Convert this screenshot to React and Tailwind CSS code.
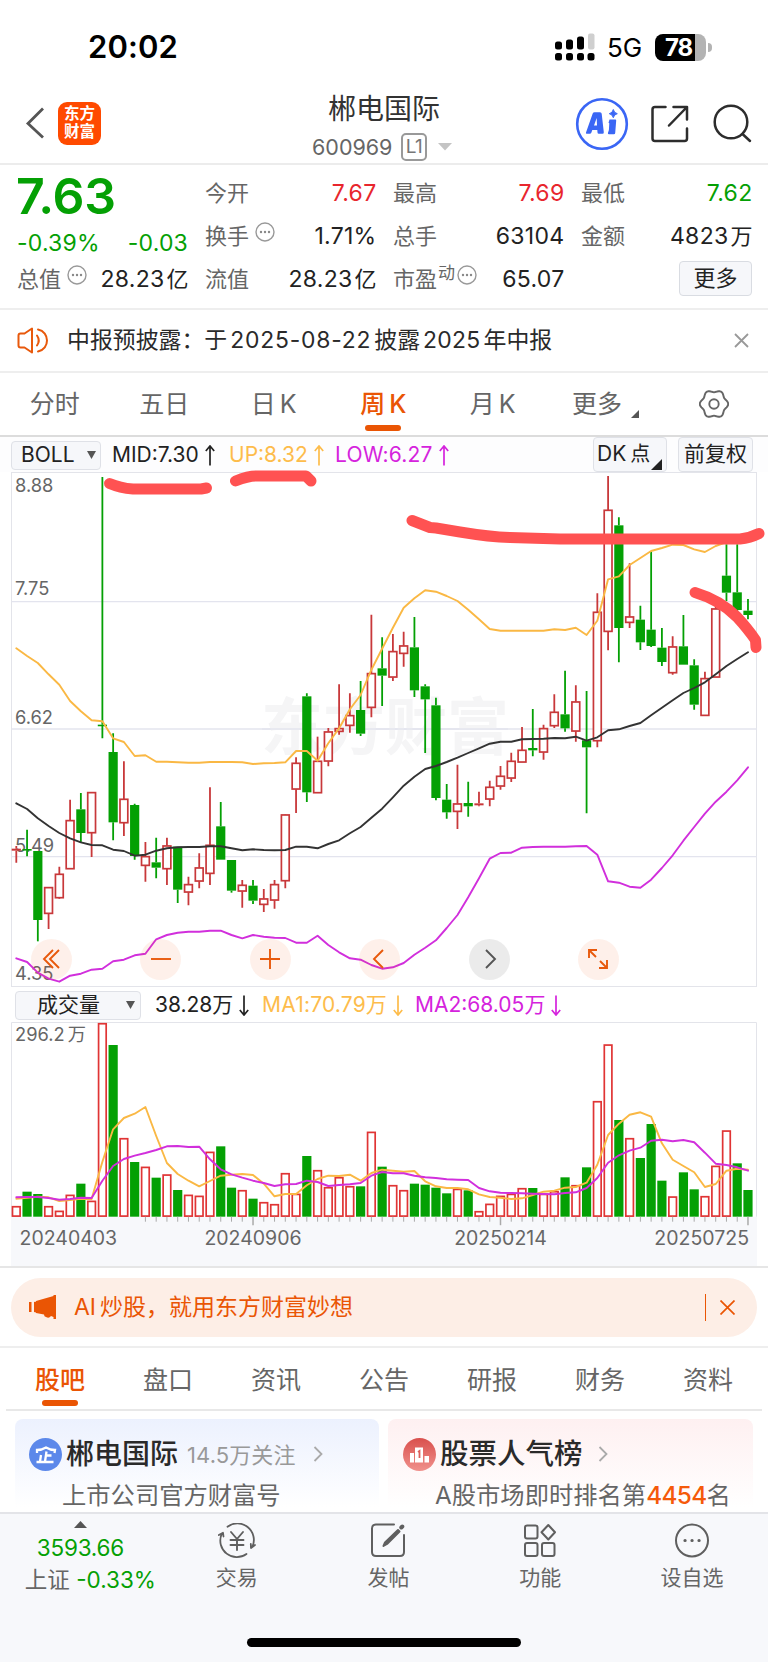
import React from "react";

const FONT = "font-['Inter','Noto_Sans_CJK_SC',sans-serif]";
const GREEN = "#04a004";
const RED = "#c8383a";
const VOL_RED = "#e03434";

const STEP = 10.76;
const cx = (i) => 16.3 + i * STEP;

// [high, bodyTop, bodyBottom, low, up] in thirds of a pixel from the price panel origin
const CANDLES = [
  [1140, 1148, 1154, 1190, 1], [1091, 1149, 1153, 1171, 0], [1155, 1155, 1362, 1426, 0], [1264, 1264, 1343, 1389, 1],
  [1202, 1224, 1296, 1298, 1], [1001, 1063, 1209, 1209, 1], [981, 1030, 1101, 1130, 0], [978, 979, 1101, 1173, 1],
  [33, 776, 780, 817, 0], [802, 858, 1069, 1123, 0], [886, 999, 1071, 1110, 1], [1013, 1017, 1170, 1181, 0],
  [1128, 1171, 1199, 1247, 1], [1115, 1189, 1205, 1237, 0], [1115, 1139, 1209, 1257, 1], [1142, 1142, 1271, 1311, 0],
  [1232, 1255, 1279, 1318, 1], [1162, 1205, 1246, 1267, 1], [964, 1137, 1223, 1257, 1], [1008, 1081, 1181, 1181, 0],
  [1182, 1182, 1274, 1280, 0], [1242, 1257, 1276, 1325, 1], [1242, 1259, 1304, 1314, 0], [1269, 1298, 1316, 1338, 1],
  [1242, 1255, 1303, 1328, 1], [1045, 1046, 1245, 1267, 1], [874, 891, 970, 1041, 1], [682, 691, 979, 1008, 0],
  [812, 885, 981, 981, 1], [786, 797, 886, 901, 1], [655, 787, 797, 806, 1], [682, 748, 779, 800, 1],
  [645, 732, 803, 810, 0], [446, 622, 725, 754, 1], [514, 607, 629, 720, 0], [504, 556, 634, 645, 1],
  [497, 539, 563, 602, 1], [453, 544, 673, 693, 0], [655, 661, 700, 861, 0], [695, 718, 996, 1003, 0],
  [954, 1001, 1039, 1058, 0], [896, 1013, 1037, 1089, 1], [947, 1011, 1021, 1052, 0], [977, 1012, 1018, 1021, 1],
  [944, 963, 1000, 1021, 1], [900, 930, 961, 971, 1], [860, 885, 937, 948, 1], [783, 852, 889, 889, 1],
  [729, 846, 853, 871, 0], [776, 787, 859, 881, 1], [685, 738, 780, 786, 1], [614, 745, 787, 797, 0],
  [658, 707, 796, 827, 1], [675, 823, 844, 1042, 0], [382, 438, 825, 844, 1], [30, 132, 497, 553, 1],
  [154, 178, 486, 589, 0], [292, 452, 470, 486, 1], [419, 461, 529, 552, 0], [257, 491, 540, 543, 0],
  [486, 545, 588, 600, 0], [511, 542, 621, 626, 1], [447, 541, 596, 596, 0], [580, 598, 716, 731, 0],
  [617, 637, 749, 749, 1], [400, 428, 634, 634, 1], [235, 329, 380, 405, 0], [235, 379, 432, 472, 0],
  [399, 434, 447, 460, 0],
];

const UP = [547, 570, 591, 625, 656, 705, 736, 763, 766, 817, 828, 870, 868, 887, 887, 889, 890, 890, 888, 888, 888, 889, 894, 892, 891, 889, 855, 855, 884, 832, 787, 730, 687, 611, 548, 485, 425, 397, 373, 377, 390, 405, 431, 460, 489, 494, 494, 494, 494, 494, 490, 492, 485, 507, 464, 340, 331, 297, 276, 255, 246, 236, 237, 250, 258, 240, 228, 226, 226];
const MID = [1012, 1029, 1057, 1080, 1101, 1117, 1129, 1137, 1138, 1151, 1155, 1169, 1166, 1154, 1147, 1144, 1143, 1143, 1141, 1141, 1147, 1153, 1150, 1152, 1153, 1152, 1142, 1142, 1147, 1134, 1123, 1102, 1083, 1055, 1028, 994, 959, 932, 909, 900, 888, 875, 861, 847, 833, 827, 827, 820, 819, 818, 816, 817, 812, 824, 814, 793, 790, 780, 771, 748, 725, 703, 681, 666, 649, 625, 600, 579, 559];
const LOW = [1477, 1488, 1520, 1538, 1547, 1529, 1523, 1511, 1508, 1486, 1481, 1468, 1463, 1420, 1407, 1400, 1397, 1397, 1394, 1394, 1407, 1417, 1407, 1412, 1415, 1416, 1430, 1430, 1409, 1437, 1459, 1477, 1481, 1497, 1508, 1504, 1491, 1466, 1445, 1423, 1386, 1347, 1294, 1237, 1178, 1161, 1160, 1145, 1143, 1142, 1142, 1142, 1141, 1140, 1166, 1246, 1250, 1262, 1265, 1241, 1206, 1168, 1124, 1083, 1043, 1007, 977, 943, 904];

// bar tops in thirds of a pixel; a negative value is a falling week
const VOLUME = [679, -635, -642, 679, 693, 645, -611, 663, 130, -195, 475, -546, 561, -593, 584, -630, 645, 648, 516, -499, -623, 631, -656, 667, 673, 580, 642, -528, 571, 622, 592, 619, -619, 456, -560, 616, 631, -611, -614, -623, -640, 627, -631, 694, 672, 648, 642, 625, -624, 642, 634, -592, 616, -562, 364, 194, -420, 475, -534, -432, -602, 650, -577, -628, 649, 558, 452, -550, -630];
const MA1 = [656, 653, 650, 652, 663, 660, 656, 657, 545, 448, 414, 401, 381, 468, 549, 582, 602, 619, 603, 587, 584, 582, 585, 611, 649, 642, 642, 616, 597, 587, 588, 584, 602, 579, 569, 572, 575, 573, 604, 619, 624, 624, 628, 643, 651, 653, 657, 655, 645, 635, 632, 623, 621, 608, 554, 465, 431, 404, 397, 410, 490, 539, 558, 577, 621, 612, 572, 566, 569];
const MA2 = [652, 651, 651, 654, 659, 657, 653, 654, 602, 558, 537, 527, 519, 510, 499, 498, 501, 500, 538, 568, 583, 593, 602, 609, 618, 613, 612, 602, 606, 618, 615, 613, 609, 587, 576, 580, 580, 587, 592, 594, 598, 599, 600, 624, 634, 638, 639, 640, 641, 642, 643, 639, 637, 624, 594, 548, 526, 512, 503, 482, 479, 484, 480, 487, 518, 551, 555, 562, 572];

const line = (vals, off) => vals.map((v, i) => `${cx(i).toFixed(1)},${(v / 3 - off).toFixed(1)}`).join(" ");

const GEAR = Array.from({ length: 72 }, (_, i) => {
  const a = (i * Math.PI) / 36;
  const r = 13 + 1.2 * Math.cos(6 * a);
  return `${(15 + r * Math.cos(a)).toFixed(2)},${(15 + r * Math.sin(a)).toFixed(2)}`;
}).join(" ");

function Line({ data, off, color }) {
  return <polyline points={line(data, off)} fill="none" stroke={color} strokeWidth="1.9" strokeLinejoin="round" strokeLinecap="round" />;
}

function Dots() {
  return (
    <svg width="20" height="20" viewBox="0 0 20 20" fill="none" className="shrink-0">
      <circle cx="10" cy="10" r="9" stroke="#999" strokeWidth="1.4" />
      <circle cx="6" cy="10" r="1.2" fill="#888" />
      <circle cx="10" cy="10" r="1.2" fill="#888" />
      <circle cx="14" cy="10" r="1.2" fill="#888" />
    </svg>
  );
}

function StatusBar() {
  return (
    <div className="flex h-[82px] items-start justify-between pl-[88px] pr-[56px] pt-[27px]">
      <div className="text-[31px] font-semibold leading-[40px] tracking-[0.1px] text-black">20:02</div>
      <div className="flex items-center pt-[5px]">
        <svg width="40" height="28" viewBox="0 0 40 28" fill="#000">
          <rect x="0" y="8.5" width="7" height="8" rx="2.5" />
          <rect x="11" y="6.5" width="7" height="10" rx="2.5" />
          <rect x="22" y="3.5" width="7" height="13" rx="2.5" />
          <rect x="33" y="0.5" width="6.5" height="16" rx="2" fill="#cfcfcf" />
          <rect x="0" y="20" width="7" height="7.5" rx="2.5" />
          <rect x="11" y="20" width="7" height="7.5" rx="2.5" />
          <rect x="22" y="20" width="7" height="7.5" rx="2.5" />
          <rect x="32.5" y="20" width="7" height="7.5" rx="2.5" />
        </svg>
        <div className="ml-[12px] w-[38px] whitespace-nowrap pt-[2px] text-[26px] leading-[28px] tracking-[0px] text-black">5G</div>
        <div className="ml-[10px] flex items-center gap-[2px]">
          <div className="h-[27px] w-[51px] rounded-[8px] bg-[linear-gradient(90deg,#000_40px,#b3b3b3_40px)] pl-[10px] text-[24px] font-bold leading-[27px] tracking-[-1.2px] text-white">
            78
          </div>
          <div className="h-[9px] w-[4px] rounded-r-full bg-[#b3b3b3]" />
        </div>
      </div>
    </div>
  );
}

function Header() {
  return (
    <div className="flex h-[83px] items-start border-b-2 border-[#ececec]">
      <div className="flex w-[300px] items-center pl-[25px] pt-[20px]">
        <svg width="20" height="32" viewBox="0 0 20 32" fill="none" stroke="#555" strokeWidth="2.8">
          <path d="M18 1.5 3 16.5 18 30.500" />
        </svg>
        <div className="ml-[13px] flex h-[43px] w-[43px] flex-col items-center justify-center rounded-[9px] bg-[#ff4a00] text-[15.500px] font-bold leading-[18px] text-white">
          <span>东方</span>
          <span>财富</span>
        </div>
      </div>
      <div className="flex w-[168px] flex-col items-center">
        <div className="pt-[9px] text-[28px] leading-[36px] text-[#333]">郴电国际</div>
        <div className="flex items-center self-start pl-[12px] pt-[6px]">
          <span className="w-[82px] text-[21.500px] leading-[28px] tracking-[0px] text-[#666]">600969</span>
          <span className="ml-[7px] flex h-[28px] w-[26px] items-center justify-center rounded-[5px] border-2 border-[#999] text-[19px] leading-[24px] tracking-[-0.5px] text-[#777]">L1</span>
          <svg className="ml-[11px]" width="14" height="8" viewBox="0 0 14 8" fill="#c4c4c4"><path d="M0 0H14L7 7.5Z" /></svg>
        </div>
      </div>
      <div className="flex grow items-center justify-end pr-[16px] pt-[15px]">
        <svg width="54" height="54" viewBox="0 0 54 54" fill="none">
          <circle cx="27" cy="27" r="24.8" stroke="#3a66f5" strokeWidth="2.6" />
          <path
            d="M11 35.500 17.700 16.500Q18.200 15.300 19.500 15.300H25Q26.500 15.300 26.700 16.800L28.800 35.200Q28.900 36.700 27.500 36.700H23.800Q22.600 36.700 22.500 35.500L22.300 33H17.300L16.300 35.700Q15.900 36.700 14.800 36.700H11.800Q10.600 36.700 11 35.500ZM19 28.500 21.700 21 22 28.500Z"
            fill="#3a66f5"
            fillRule="evenodd"
          />
          <path d="M34.500 22.500H40.300Q41.300 22.500 41.200 23.500L40.200 36Q40.100 37.300 38.800 37.300H34Q32.800 37.300 32.900 36L33.900 33 34.300 26.200 33.500 25.800Z" fill="#3a66f5" />
          <path d="M38.300 12.500Q39 16 42.300 16.700Q39 17.400 38.300 20.700Q37.600 17.400 34.300 16.700Q37.600 16 38.300 12.500Z" fill="#3a66f5" stroke="#3a66f5" />
        </svg>
        <svg className="ml-[22px]" width="38" height="38" viewBox="0 0 38 38" fill="none" stroke="#2d2d2d" strokeWidth="2.5" strokeLinecap="round" strokeLinejoin="round">
          <path d="M14.5 2H4Q1.500 2 1.500 4.500V33.500Q1.500 36 4 36H33.500Q36 36 36 33.500V23.500" />
          <path d="M22.500 2H36V14.500M36 2 18 20.500" />
        </svg>
        <svg className="ml-[24px]" width="39" height="39" viewBox="0 0 39 39" fill="none" stroke="#2d2d2d" strokeWidth="2.5" strokeLinecap="round">
          <circle cx="18" cy="18" r="16.3" />
          <path d="M29.5 30 37 37" />
        </svg>
      </div>
    </div>
  );
}

function Stat({ label, extra, value, unit, className }) {
  return (
    <div className="flex h-[43px] items-center justify-between">
      <div className="flex items-center text-[22px] text-[#666]">
        {label}
        {extra}
      </div>
      <div className={className + " -mr-[0.5px] whitespace-nowrap text-[23px] tracking-[0.3px]"}>
        {value}
        {unit && <span className="pl-[2px] text-[22px] tracking-normal">{unit}</span>}
      </div>
    </div>
  );
}

function Quote() {
  return (
    <div className="flex h-[145px] justify-between border-b-2 border-[#eee] pl-[17px] pr-[16px] pt-[7px]">
      <div className="flex w-[171px] flex-col">
        <div className="-ml-[1px] h-[48px] text-[50px] font-semibold leading-[48px] tracking-[-0.3px] text-[#04a004]">7.63</div>
        <div className="mt-[5px] flex h-[36px] items-center justify-between text-[23px] tracking-[0.2px] text-[#04a004]">
          <span>-0.39%</span>
          <span>-0.03</span>
        </div>
        <div className="-mt-[3px]">
          <Stat label="总值" extra={<span className="-mt-[9px] ml-[6px]"><Dots /></span>} value="28.23" unit="亿" className="text-[#222]" />
        </div>
      </div>
      <div className="w-[171px]">
        <Stat label="今开" value="7.67" className="text-[#e8262d]" />
        <Stat label="换手" extra={<span className="-mt-[9px] ml-[6px]"><Dots /></span>} value="1.71%" className="text-[#222]" />
        <Stat label="流值" value="28.23" unit="亿" className="text-[#222]" />
      </div>
      <div className="w-[171px]">
        <Stat label="最高" value="7.69" className="text-[#e8262d]" />
        <Stat label="总手" value="63104" className="text-[#222]" />
        <Stat
          label="市盈"
          extra={<span className="-mt-[12px] ml-[1px] flex items-center gap-[2px] text-[17px]">动<span className="pt-[3px]"><Dots /></span></span>}
          value="65.07"
          className="text-[#222]"
        />
      </div>
      <div className="w-[171px]">
        <Stat label="最低" value="7.62" className="text-[#04a004]" />
        <Stat label="金额" value="4823" unit="万" className="text-[#222]" />
        <div className="flex justify-end pt-[3px]">
          <div className="flex h-[35px] w-[73px] items-center justify-center rounded-[4px] border border-[#d9dce2] bg-[#f6f7fa] text-[22px] text-[#222]">更多</div>
        </div>
      </div>
    </div>
  );
}

function Notice() {
  return (
    <div className="flex h-[63px] items-center border-b-2 border-[#eee] pl-[17px] pr-[19px]">
      <svg width="32" height="27" viewBox="0 0 32 27" fill="none" stroke="#e8590c" strokeWidth="2" strokeLinecap="round" strokeLinejoin="round">
        <path d="M15 1.5V25.5L7.500 20.500H3.500Q1.500 20.500 1.500 18.500V8.500Q1.500 6.500 3.500 6.500H7.500Z" />
        <path d="M20 8.5Q23.500 13.500 20 18.500M21 2.500C33 5 33 22 21 24.500" />
      </svg>
      <div className="ml-[18px] grow whitespace-nowrap text-[22.9px] text-[#2a2a2a]">
        中报预披露：于<span className="px-[3px] tracking-[0.8px]">2025-08-22</span>披露<span className="px-[3px] tracking-[0.3px]">2025</span>年中报
      </div>
      <svg width="15" height="15" viewBox="0 0 15 15" stroke="#999" strokeWidth="1.8"><path d="M1 1 14 14M14 1 1 14" /></svg>
    </div>
  );
}

function PeriodTabs() {
  const tabs = ["分时", "五日", "日K", "周K", "月K"];
  return (
    <div className="flex h-[64px] border-b-2 border-[#dcdcdc] text-[25px] text-[#666]">
      {tabs.map((t) => (
        <div key={t} className={"relative flex w-[109.5px] items-center justify-center pt-[2px] " + (t === "周K" ? "font-medium text-[#ea5504]" : "")}>
          <span>{t[0]}</span>
          <span className={t[1] === "K" ? "ml-[4px]" : ""}>{t[1]}</span>
          {t === "周K" && <span className="absolute bottom-[4px] h-[6px] w-[36px] rounded-[3px] bg-[#ea5504]" />}
        </div>
      ))}
      <div className="flex w-[112px] items-center justify-center pl-[4px] pt-[2px]">
        更多
        <svg className="ml-[9px] mt-[18px]" width="8" height="8" viewBox="0 0 8 8" fill="#555"><path d="M8 0V8H0Z" /></svg>
      </div>
      <div className="flex w-[108px] items-center justify-center">
        <svg width="30" height="30" viewBox="0 0 30 30" fill="none" stroke="#666" strokeWidth="1.900" strokeLinejoin="round">
          <polygon points={GEAR} />
          <circle cx="15" cy="15" r="4.700" />
        </svg>
      </div>
    </div>
  );
}

function ChartLegend() {
  return (
    <div className="flex h-[35px] items-center bg-[#fdfdfe] pl-[11px] pr-[15px] text-[21px] leading-[24px]">
      <div className="mt-[2px] flex h-[29px] w-[90px] items-center justify-between rounded-[4px] border border-[#dfe1e7] bg-[#f6f7fa] pl-[9px] pr-[4px] text-[#222]">
        BOLL
        <svg width="9" height="8" viewBox="0 0 9 8" fill="#555"><path d="M0 0H9L4.5 8Z" /></svg>
      </div>
      <div className="ml-[11px] mt-[2px] flex w-[117px] items-center whitespace-nowrap text-[#222]"><span>MID:7.30</span><Arrow /></div>
      <div className="mt-[2px] flex w-[106px] items-center whitespace-nowrap text-[#fdbc4b]"><span>UP:8.32</span><Arrow /></div>
      <div className="mt-[2px] flex grow items-center whitespace-nowrap text-[#d523dd]"><span className="tracking-[0.2px]">LOW:6.27</span><Arrow /></div>
      <div className="flex h-[35px] w-[74px] items-center justify-between rounded-[4px] border border-[#dfe1e7] bg-[#f6f7fa] pl-[3px] pr-[4px] text-[#222]">
        <span className="whitespace-nowrap">DK<span className="pl-[4px] text-[20px]">点</span></span>
        <svg className="-ml-[4px] mt-[20px] shrink-0" width="11" height="11" viewBox="0 0 11 11" fill="#222"><path d="M11 0V11H0Z" /></svg>
      </div>
      <div className="ml-[11px] flex h-[35px] w-[75px] items-center justify-center rounded-[4px] border border-[#dfe1e7] bg-[#f6f7fa] text-[21px] text-[#222]">前复权</div>
    </div>
  );
}

function Arrow({ down }) {
  return (
    <svg className="ml-[6px] shrink-0" width="10" height="21" viewBox="0 0 10 21" fill="none" stroke="currentColor" strokeWidth="1.7">
      <path d={down ? "M5 0.5V20M0.800 15 5 20 9.200 15" : "M5 20.5V1M0.800 6 5 1 9.200 6"} />
    </svg>
  );
}

function RoundButton({ gray, children }) {
  return (
    <div className={"flex h-[41px] w-[41px] items-center justify-center rounded-full " + (gray ? "bg-black/[0.08] text-[#555]" : "bg-[#f05a14]/[0.09] text-[#e8590c]")}>
      <svg width="24" height="24" viewBox="0 0 24 24" fill="none" stroke="currentColor" strokeWidth="1.9">{children}</svg>
    </div>
  );
}

function PriceChart() {
  const off = 6;
  return (
    <div className="relative h-[516px]">
      <svg className="block" width="768" height="516" viewBox="0 0 768 516">
        <rect x="11.5" y="0.5" width="745" height="514" fill="none" stroke="#e3e4ea" />
        {[129.7, 257, 384.7].map((y) => <path key={y} d={`M11.5 ${y}H756.5`} stroke="#e3e4ee" strokeWidth="1.3" />)}
        <text x="261" y="278" fontSize="62" fontWeight="700" fill="#f5f5f6" className="font-['Noto_Sans_CJK_SC',sans-serif]">东方财富</text>
        <path d="M262 257H508" stroke="#e3e4ee" strokeWidth="1.3" />
        <g fontSize="18.3" fill="#666">
          <text x="15" y="20">8.88</text>
          <text x="15" y="122.500">7.75</text>
          <text x="15" y="251.500">6.62</text>
          <text x="15" y="379.500">5.49</text>
          <text x="15" y="507.500">4.35</text>
        </g>
        {CANDLES.map(([h, t, b, l, up], i) => {
          const x = cx(i);
          const [H, T, B, L] = [h, t, b, l].map((v) => v / 3 - off);
          const c = up ? RED : GREEN;
          const solid = !up || B - T < 2.5;
          return (
            <g key={i}>
              <path d={`M${x} ${H}V${T}M${x} ${B}V${L}`} stroke={c} strokeWidth="1.8" />
              {solid ? (
                <rect x={x - 4.6} y={T} width="9.2" height={Math.max(B - T, 1.6)} fill={c} />
              ) : (
                <rect x={x - 3.9} y={T + 0.3} width="7.8" height={B - T - 0.6} fill="#fff" stroke={c} strokeWidth="1.7" />
              )}
            </g>
          );
        })}
        <Line data={UP} off={off} color="#fab844" />
        <Line data={MID} off={off} color="#333" />
        <Line data={LOW} off={off} color="#d12fdc" />
      </svg>
      <div className="absolute left-[31px] top-[467px] flex w-[588px] justify-between">
        <RoundButton><path d="M13 3 4 12 13 21M19 3 10 12 19 21" /></RoundButton>
        <RoundButton><path d="M2 12H22" /></RoundButton>
        <RoundButton><path d="M2 12H22M12 2V22" /></RoundButton>
        <RoundButton><path d="M15 3 6 12 15 21" /></RoundButton>
        <RoundButton gray><path d="M9 3 18 12 9 21" /></RoundButton>
        <RoundButton><path d="M3 11V3H11M3 3 10 10M21 13V21H13M21 21 14 14" /></RoundButton>
      </div>
      <svg className="pointer-events-none absolute left-0 top-[-6px]" width="768" height="240" viewBox="0 0 768 240" fill="none" stroke="#ff5252" strokeWidth="11" strokeLinecap="round" strokeLinejoin="round">
        <path d="M109.5 17.5Q120 22 133 23H201L206.500 22" />
        <path d="M235.5 15Q248 10 256 10H306L311 15" />
        <path d="M412 54.5 430 61.5 436 62 460 66Q490 71 510 71.500L560 73H740Q750 72 759 67.500" />
        <path d="M695 126.5Q720 134 737 151Q748 163 755.500 174L756 181.500" />
      </svg>
    </div>
  );
}

function VolumeLegend() {
  return (
    <div className="flex h-[35px] items-center pl-[15px] pt-[1px] text-[21px] leading-[24px]">
      <div className="flex h-[29px] w-[126px] items-center justify-between rounded-[4px] border border-[#dfe1e7] bg-[#f6f7fa] pl-[21px] pr-[5px] text-[#222]">
        成交量
        <svg width="9" height="8" viewBox="0 0 9 8" fill="#555"><path d="M0 0H9L4.5 8Z" /></svg>
      </div>
      <div className="ml-[14px] flex w-[107px] items-center whitespace-nowrap text-[#222]"><span>38.28万</span><Arrow down /></div>
      <div className="flex w-[153px] items-center whitespace-nowrap text-[#fdbc4b]"><span className="tracking-[0.2px]">MA1:70.79万</span><Arrow down /></div>
      <div className="flex items-center whitespace-nowrap text-[#d523dd]"><span>MA2:68.05万</span><Arrow down /></div>
    </div>
  );
}

function VolumeChart() {
  const off = 42;
  const base = 236.7 - off;
  const dates = [["20240403", 19.5, "start"], ["20240906", 253, "middle"], ["20250214", 500.5, "middle"], ["20250725", 749, "end"]];
  return (
    <div className="h-[246px] border-b-2 border-[#e6e6e6]">
      <svg className="block" width="768" height="244" viewBox="0 0 768 244">
        <rect x="11" y={base} width="746" height="50" fill="#f7f8fb" />
        <path d={`M11.5 ${base}V0.5H756.5V${base}`} fill="none" stroke="#e3e4ea" />
        <text x="15" y="19" fontSize="18.3" fill="#666">296.2<tspan dx="3">万</tspan></text>
        {VOLUME.map((v, i) => {
          const x = cx(i);
          const y = Math.abs(v) / 3 - off;
          return v < 0 ? (
            <rect key={i} x={x - 4.6} y={y} width="9.2" height={base - y} fill={GREEN} />
          ) : (
            <rect key={i} x={x - 3.8} y={y + 0.4} width="7.6" height={base - y - 1} fill="#fff" stroke={VOL_RED} strokeWidth="1.7" />
          );
        })}
        {VOLUME.map((_, i) => i > 11 && (
          <path key={i} d={`M${cx(i)} ${base}v${[22, 45, 68].includes(i) ? 8.5 : 5}`} stroke="#aaa" strokeWidth={[22, 45, 68].includes(i) ? 1.5 : 1} />
        ))}
        <Line data={MA1} off={off} color="#fab844" />
        <Line data={MA2} off={off} color="#d12fdc" />
        {dates.map(([d, x, a]) => <text key={d} x={x} y="223" fontSize="19.5" fill="#666" textAnchor={a}>{d}</text>)}
      </svg>
    </div>
  );
}

function Banner() {
  return (
    <div className="flex h-[80px] items-center border-b-2 border-[#eee] px-[11px]">
      <div className="flex h-[59px] grow items-center rounded-full bg-[#fdeee6] pl-[18px] pr-[22px] text-[#ea5504]">
        <svg width="28" height="24" viewBox="0 0 28 24" fill="#ea5504">
          <path d="M0 7H2.5V17H0ZM5 7 7 6.5V17.5L5 17ZM7 6 24.5 1V0H27V24H24.5V22L22 21Q20 24 17 22Q15 21.5 15 19.500L7 18Z" />
        </svg>
        <div className="ml-[17px] grow text-[23px]">AI<span className="pl-[4px]">炒股，就用东方财富妙想</span></div>
        <div className="h-[27px] w-[1.5px] bg-[#ea5504]" />
        <svg className="ml-[14px]" width="15" height="15" viewBox="0 0 15 15" stroke="#ea5504" strokeWidth="1.7"><path d="M0.5 0.5 14.5 14.5M14.5 0.5 0.5 14.500" /></svg>
      </div>
    </div>
  );
}

function SectionTabs() {
  const tabs = ["股吧", "盘口", "资讯", "公告", "研报", "财务", "资料"];
  return (
    <div className="mx-[6px] flex h-[63px] border-b-2 border-[#e8e8e8] text-[25px] text-[#666]">
      {tabs.map((t, i) => (
        <div key={t} className={"relative flex w-[108px] items-center justify-center pt-[3px] " + (i === 0 ? "font-medium text-[#ea5504]" : "")}>
          {t}
          {i === 0 && <span className="absolute bottom-[3px] h-[6px] w-[36px] rounded-[3px] bg-[#ea5504]" />}
        </div>
      ))}
    </div>
  );
}

function Chevron() {
  return <svg width="10" height="16" viewBox="0 0 10 16" fill="none" stroke="#aaa" strokeWidth="1.8"><path d="M1.5 1 8.5 8 1.5 15" /></svg>;
}

function Cards() {
  return (
    <div className="flex h-[101px] gap-[9px] overflow-hidden pl-[15px] pr-[15px] pt-[8px]">
      <div className="h-[110px] w-[364px] rounded-[8px] bg-gradient-to-b from-[#ecf1fe] to-white to-80% pt-[17px]">
        <div className="flex h-[36px] items-center pl-[14px]">
          <svg width="33" height="33" viewBox="0 0 33 33" fill="none">
            <circle cx="16.5" cy="16.5" r="16.5" fill="#5c88ea" />
            <path d="M8 15V12Q13 12 17 9.500Q21 12 26 12L25.500 15M17.500 13.500 16 23.500M17 17.500H22.500M12 17 11 23.500M7.500 24H24.500" stroke="#fff" strokeWidth="2.300" />
          </svg>
          <span className="ml-[4px] text-[28px] font-medium text-[#2a2a2a]">郴电国际</span>
          <span className="ml-[9px] pt-[2px] text-[22px] tracking-[0.1px] text-[#999]">14.5万关注</span>
          <span className="ml-[17px]"><Chevron /></span>
        </div>
        <div className="pl-[47px] text-[24.3px] leading-[47px] text-[#666]">上市公司官方财富号</div>
      </div>
      <div className="h-[110px] w-[365px] rounded-[8px] bg-gradient-to-b from-[#fef0f1] to-white to-80% pt-[17px]">
        <div className="flex h-[36px] items-center pl-[15px]">
          <svg width="33" height="33" viewBox="0 0 33 33">
            <defs><linearGradient id="rank" x1="0" y1="0" x2="0" y2="1"><stop offset="0" stopColor="#d9504d" /><stop offset="1" stopColor="#f0918c" /></linearGradient></defs>
            <circle cx="16.5" cy="16.5" r="16.5" fill="url(#rank)" />
            <path d="M7 15H11V24.5H7ZM12 9.5H20V24.5H12ZM21.5 18H26V24.5H21.5Z" fill="#fff" />
            <path d="M15 14 16.5 13V20" fill="none" stroke="#dc5f5b" strokeWidth="1.8" />
          </svg>
          <span className="ml-[4px] text-[28.5px] font-medium text-[#2a2a2a]">股票人气榜</span>
          <span className="ml-[15px]"><Chevron /></span>
        </div>
        <div className="whitespace-nowrap pl-[47px] text-[24.3px] leading-[47px] text-[#666]">A股市场即时排名第<span className="font-medium tracking-[-0.6px] text-[#f55a0a]">4454</span>名</div>
      </div>
    </div>
  );
}

function NavItem({ label, children }) {
  return (
    <div className="flex w-[152px] flex-col items-center pt-[9px] text-[21px] text-[#666]">
      <svg width="38" height="36" viewBox="0 0 38 36" fill="none" stroke="#5f5f5f" strokeWidth="2" strokeLinecap="round" strokeLinejoin="round">{children}</svg>
      <span className="pt-[1px] leading-[36px]">{label}</span>
    </div>
  );
}

function BottomBar() {
  return (
    <div className="flex h-[150px] flex-col items-center justify-between border-t-2 border-[#e3e4e8] bg-[#f7f8fb] pb-[15px]">
      <div className="flex w-full">
        <div className="flex w-[161px] flex-col items-center pt-[7px] text-[22.5px] text-[#04a004]">
          <svg width="13" height="7" viewBox="0 0 13 7" fill="#555"><path d="M0 7 6.5 0 13 7Z" /></svg>
          <span className="pt-[3px] leading-[34px] tracking-[-0.2px]">3593.66</span>
          <span className="whitespace-nowrap pl-[20px] leading-[30px]"><span className="text-[#666]">上证</span> -0.33%</span>
        </div>
        <NavItem label="交易">
          <path d="M9.500 4.200A16.500 16.500 0 0 1 34.500 24M37 22.500 33 25.500 32.800 21.500M28.500 31.500A16.500 16.500 0 0 1 3.500 12M0.800 12.500 5 10.300 5.500 14" transform="translate(0 -0.500)" strokeWidth="1.8" />
          <path d="M13 9 19 16 25 9M19 16V27M12.5 17H25.5M12.5 22H25.5" strokeWidth="1.9" />
        </NavItem>
        <NavItem label="发帖">
          <path d="M25 1.5H7Q3 1.500 3 5.500V29Q3 33 7 33H31Q35 33 35 29V12" />
          <path d="M14.500 23 16 19.500 29 7 30.500 8.500 18 21Z" fill="#5f5f5f" />
          <path d="M32.300 4.500 33.300 3.500" strokeWidth="4" />
        </NavItem>
        <NavItem label="功能">
          <rect x="4" y="2.5" width="12.5" height="13" rx="2" />
          <rect x="4" y="20" width="12.5" height="13" rx="2" />
          <rect x="21" y="20" width="12.5" height="13" rx="2" />
          <path d="M27.3 2 34 9.3 27.300 16.500 20.500 9.300Z" />
        </NavItem>
        <NavItem label="设自选">
          <circle cx="19" cy="17.5" r="16" />
          <path d="M12 17.5h0.1M19 17.5h0.1M26 17.5h0.1" strokeWidth="3.2" />
        </NavItem>
      </div>
      <div className="h-[9px] w-[274px] rounded-full bg-black" />
    </div>
  );
}

export default function App() {
  return (
    <div className={FONT + " flex h-[1662px] w-[768px] flex-col overflow-hidden bg-white"}>
      <StatusBar />
      <Header />
      <Quote />
      <Notice />
      <PeriodTabs />
      <ChartLegend />
      <PriceChart />
      <VolumeLegend />
      <VolumeChart />
      <Banner />
      <SectionTabs />
      <Cards />
      <BottomBar />
    </div>
  );
}
